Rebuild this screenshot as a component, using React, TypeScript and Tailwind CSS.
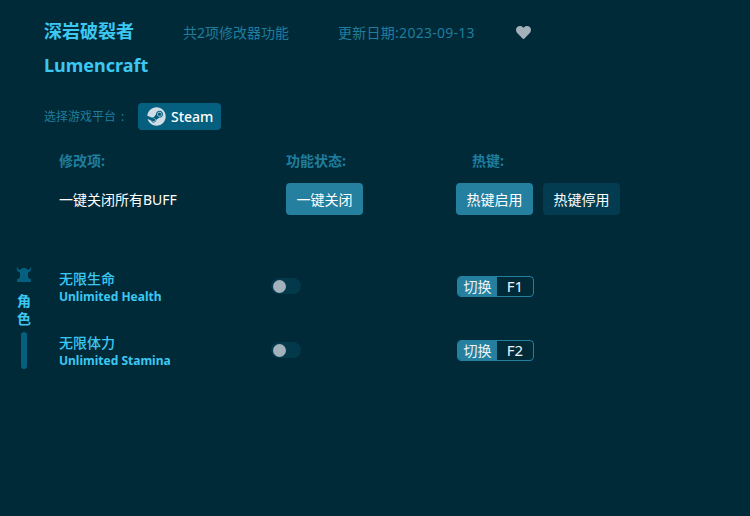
import { FaHeart, FaSteam } from "react-icons/fa";

const font = { fontFamily: '"Noto Sans", "Noto Sans CJK SC", sans-serif' };

const cheats = [
  { zh: "无限生命", en: "Unlimited Health", key: "F1" },
  { zh: "无限体力", en: "Unlimited Stamina", key: "F2" },
];

function Toggle() {
  return (
    <div className="mt-[9px] flex h-4 w-[30px] items-center rounded-full bg-[#03394b]">
      <div className="ml-[2px] h-[13px] w-[13px] rounded-full bg-[#a3b1bb]" />
    </div>
  );
}

function Hotkey({ name }: { name: string }) {
  return (
    <div className="mt-[7px] flex h-[21px] w-[77px] overflow-hidden rounded-[4px] border border-[#25809f] text-[14px] leading-[19px]">
      <span className="w-[39px] bg-[#25809f] text-center text-[#eaf4f8]">切换</span>
      <span className="flex-1 text-center text-[15px] text-[#eaf4f8]">{name}</span>
    </div>
  );
}

function ActionButton({ label, dark, className }: { label: string; dark?: boolean; className?: string }) {
  return (
    <button
      className={`h-8 w-[77px] rounded-[4px] text-[14px] text-white ${dark ? "bg-[#033c50]" : "bg-[#25809f]"} ${className ?? ""}`}
    >
      {label}
    </button>
  );
}

export default function App() {
  return (
    <div className="h-[516px] w-[750px] overflow-hidden bg-[#012a38]" style={font}>
      <div className="pl-11 pt-[18px]">
        <div className="flex h-[28px] items-center">
          <h1 className="mb-[2px] w-[139px] text-[18px] font-bold text-[#3cc8f2]">深岩破裂者</h1>
          <span className="mt-[1px] w-[155px] text-[14px] text-[#1f7d9d]">共2项修改器功能</span>
          <span className="mt-[1px] w-[178px] text-[14px] tracking-[0.27px] text-[#1f7d9d]">更新日期:2023-09-13</span>
          <FaHeart className="text-[15px] text-[#a3b1bb]" />
        </div>
        <h2 className="mt-[6px] h-[26px] text-[18px] font-bold leading-[26px] text-[#3cc8f2]">Lumencraft</h2>
        <div className="mt-[25px] flex items-center">
          <span className="w-[94px] text-[12px] text-[#1f7d9d]">
            选择游戏平台<span className="ml-[5px]">:</span>
          </span>
          <div className="flex h-[27px] w-[83px] items-center rounded-[4px] bg-[#05607f] pl-[9px] text-[14px] font-medium text-white">
            <FaSteam className="mr-[5px] text-[19px] text-[#cfdde6]" />
            Steam
          </div>
        </div>
      </div>

      <div className="mt-5 pl-[59px]">
        <div className="flex h-5 items-center text-[14px] font-bold text-[#1f7d9d]">
          <span className="w-[227px]">修改项:</span>
          <span className="w-[186px]">功能状态:</span>
          <span>热键:</span>
        </div>
        <div className="mt-[13px] flex items-center">
          <span className="w-[227px] text-[14px] text-white">一键关闭所有BUFF</span>
          <ActionButton label="一键关闭" />
          <ActionButton label="热键启用" className="ml-[93px]" />
          <ActionButton label="热键停用" dark className="ml-[10px]" />
        </div>
      </div>

      <div className="mt-[51px] flex">
        <div className="flex w-[48px] flex-col items-center">
          <svg viewBox="0 0 16 16" className="h-4 w-4" fill="#05607f">
            <path d="M1 0.5 C1.5 2.5 2.5 3.5 4.2 4 C5 2.6 6.2 2 8 2 C9.8 2 11 2.6 11.8 4 C13.5 3.5 14.5 2.5 15 0.5 C15.8 3.5 14.5 6 12 6.6 L12 11 L13.5 13 L15 13 L15 16 L1 16 L1 13 L2.5 13 L4 11 L4 6.6 C1.5 6 0.2 3.5 1 0.5 Z" />
          </svg>
          <div className="mt-[10px] flex flex-col text-[14px] font-bold leading-[18px] text-[#3cc8f2]">
            <span>角</span>
            <span>色</span>
          </div>
          <div className="mt-[4px] h-[37px] w-[6px] rounded-full bg-[#05607f]" />
        </div>
        <div className="ml-[11px] flex flex-col gap-[29px] pt-[3px]">
          {cheats.map((c) => (
            <div key={c.key} className="flex h-[35px] items-start">
              <div className="mt-[1px] w-[212px]">
                <div className="text-[14px] font-medium leading-[18px] text-[#3cc8f2]">{c.zh}</div>
                <div className="mt-[1px] text-[12px] font-bold leading-[16px] text-[#3cc8f2]">{c.en}</div>
              </div>
              <div className="w-[186px]">
                <Toggle />
              </div>
              <Hotkey name={c.key} />
            </div>
          ))}
        </div>
      </div>
    </div>
  );
}
